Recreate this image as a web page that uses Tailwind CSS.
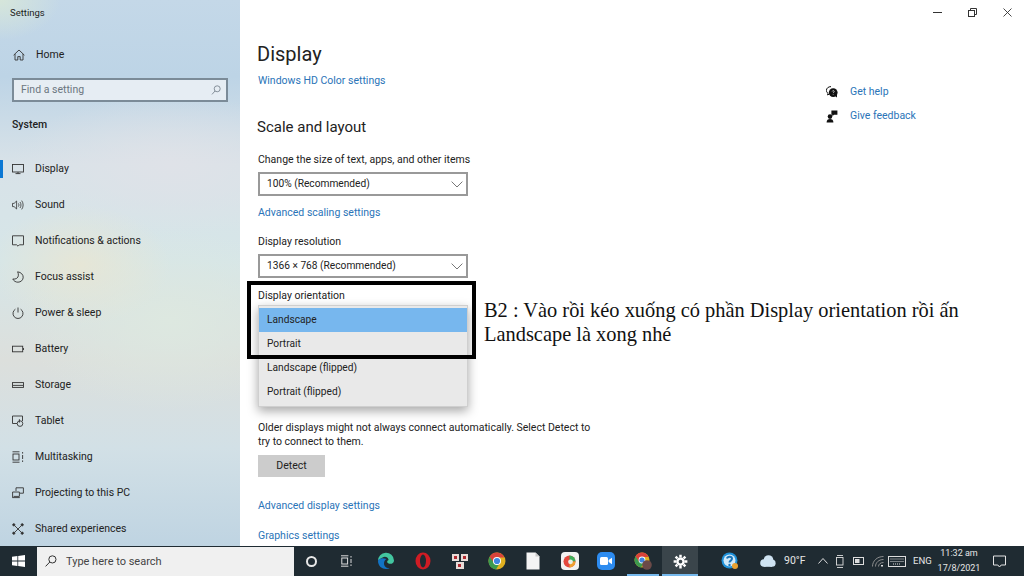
<!DOCTYPE html>
<html lang="en">
<head>
<meta charset="utf-8">
<script src="https://cdn.jsdelivr.net/npm/@tailwindcss/browser@4"></script>
</head>
<body class="m-0 bg-white overflow-hidden">
<div class="relative w-[1024px] h-[576px] overflow-hidden flex flex-col font-['Roboto','Noto_Sans',sans-serif] text-[10.5px] text-[#222]">
  <div class="flex h-[546px] overflow-hidden">
    <!-- Sidebar -->
    <aside class="w-[240px] h-[546px] shrink-0 overflow-hidden flex flex-col [&>*]:shrink-0 bg-[radial-gradient(ellipse_90px_60px_at_80px_265px,#e6e6d6,transparent),radial-gradient(ellipse_160px_70px_at_170px_165px,#dfe2e8,transparent),radial-gradient(ellipse_150px_90px_at_170px_320px,#dde8e0,transparent),radial-gradient(ellipse_60px_40px_at_0px_0px,#d6e6da,transparent),linear-gradient(180deg,#c4d8e8_0%,#bdd4e6_14%,#d8e2e8_30%,#d6e6e8_48%,#dcdfdc_66%,#d2e0e6_82%,#bfd4e2_100%)]">
      <div class="h-[26px] pl-[10px] flex items-center text-[9.5px]">Settings</div>
      <div class="h-[36px] mt-[11px] pl-[13px] flex items-center gap-[11px] text-[#222]">
        <svg class="w-[12px] h-[12px]" viewBox="0 0 12 12" fill="none" stroke="#333" stroke-width="0.9"><path d="M0.6 6.2 6 1l5.400 5.200M2 5v6h2.800V7.600h2.400V11H10V5"/></svg>
        <span>Home</span>
      </div>
      <div class="mx-[12px] mt-[5px] h-[24px] border-2 border-[#7b8b98] bg-[#e6edf3] flex items-center justify-between pl-[7px] pr-[5px] text-[#6b7680]">
        <span>Find a setting</span>
        <svg class="w-[10px] h-[10px]" viewBox="0 0 10 10" fill="none" stroke="#7b8690" stroke-width="0.9"><circle cx="6.200" cy="3.800" r="3"/><path d="M4 6 1 9.400"/></svg>
      </div>
      <div class="mt-[15px] h-[16px] pl-[12px] flex items-center font-medium text-[#222]">System</div>
      <nav class="mt-[18px] flex flex-col [&>*]:shrink-0">
        <div class="relative h-[36px] pl-[12px] flex items-center gap-[11px]">
          <span class="absolute left-0 top-[9px] w-[3px] h-[18px] bg-[#0b78d4]"></span>
          <svg class="w-[12px] h-[12px]" viewBox="0 0 12 12" fill="none" stroke="#333" stroke-width="0.9"><rect x="0.5" y="1.500" width="11" height="7.500"/><path d="M3.500 10.600h5M6 9v1.600"/></svg><span>Display</span>
        </div>
        <div class="h-[36px] pl-[12px] flex items-center gap-[11px]">
          <svg class="w-[12px] h-[12px]" viewBox="0 0 12 12" fill="none" stroke="#333" stroke-width="0.8"><path d="M0.5 4.400h1.600L4.600 2v8L2.100 7.600H0.500zM6.400 4.400c.7 1 .7 2.200 0 3.200M8 3c1.300 1.800 1.300 4.200 0 6M9.700 1.600c1.900 2.700 1.900 6.100 0 8.800"/></svg><span>Sound</span>
        </div>
        <div class="h-[36px] pl-[12px] flex items-center gap-[11px]">
          <svg class="w-[12px] h-[12px]" viewBox="0 0 12 12" fill="none" stroke="#333" stroke-width="0.9"><path d="M0.5 0.800h11v9H7.400L6 11.200 4.600 9.800H0.500z"/></svg><span>Notifications &amp; actions</span>
        </div>
        <div class="h-[36px] pl-[12px] flex items-center gap-[11px]">
          <svg class="w-[12px] h-[12px]" viewBox="0 0 12 12" fill="none" stroke="#333" stroke-width="0.9"><path d="M5.600 0.800c3.600.4 5.600 3 5.600 5.400 0 2.900-2.400 5-5.200 5C3.600 11.200 1.800 10 .8 8c3 .6 5.600-1.100 5.600-3.800 0-1.400-.3-2.400-.8-3.400z"/></svg><span>Focus assist</span>
        </div>
        <div class="h-[36px] pl-[12px] flex items-center gap-[11px]">
          <svg class="w-[12px] h-[12px]" viewBox="0 0 12 12" fill="none" stroke="#333" stroke-width="0.9"><path d="M3.400 2.200a5 5 0 1 0 5.200 0M6 .5v5"/></svg><span>Power &amp; sleep</span>
        </div>
        <div class="h-[36px] pl-[12px] flex items-center gap-[11px]">
          <svg class="w-[12px] h-[12px]" viewBox="0 0 12 12" fill="none" stroke="#333" stroke-width="0.9"><rect x="0.5" y="3.200" width="10.200" height="5.600"/><path d="M11.500 5v2"/></svg><span>Battery</span>
        </div>
        <div class="h-[36px] pl-[12px] flex items-center gap-[11px]">
          <svg class="w-[12px] h-[12px]" viewBox="0 0 12 12" fill="none" stroke="#333" stroke-width="0.9"><rect x="0.5" y="3.600" width="11" height="4.800"/><path d="M1 6.400h10"/></svg><span>Storage</span>
        </div>
        <div class="h-[36px] pl-[12px] flex items-center gap-[11px]">
          <svg class="w-[12px] h-[12px]" viewBox="0 0 12 12" fill="none" stroke="#333" stroke-width="0.9"><path d="M5 8.500H0.500V1h10v5"/><circle cx="8" cy="8.600" r="2.800"/><path d="M7.400 4.200v3.400"/></svg><span>Tablet</span>
        </div>
        <div class="h-[36px] pl-[12px] flex items-center gap-[11px]">
          <svg class="w-[12px] h-[12px]" viewBox="0 0 12 12" fill="none" stroke="#333" stroke-width="0.9"><path d="M.5 .8h7M.5 11.200h7"/><rect x="1" y="3" width="6" height="6"/><path d="M10.600 1v1.600M10.600 4v4M10.600 9.400v1.600"/></svg><span>Multitasking</span>
        </div>
        <div class="h-[36px] pl-[12px] flex items-center gap-[11px]">
          <svg class="w-[12px] h-[12px]" viewBox="0 0 12 12" fill="none" stroke="#333" stroke-width="0.9"><path d="M4 4V.8h7.400v5.400H8M.6 10.600V5h6.800v4.400H1.600M.4 10.600h7.400"/></svg><span>Projecting to this PC</span>
        </div>
        <div class="h-[36px] pl-[12px] flex items-center gap-[11px]">
          <svg class="w-[12px] h-[12px]" viewBox="0 0 12 12" fill="#333" stroke="#333" stroke-width="0.9"><circle cx="1.800" cy="1.800" r="1.100"/><circle cx="10.200" cy="1.800" r="1.100"/><circle cx="1.800" cy="10.200" r="1.100"/><circle cx="10.200" cy="10.200" r="1.100"/><path d="m2.500 2.500 7 7M9.500 2.500l-7 7" fill="none"/></svg><span>Shared experiences</span>
        </div>
      </nav>
    </aside>

    <!-- Main -->
    <main class="flex-1 flex flex-col bg-white">
      <div class="h-[24px] flex justify-end items-center shrink-0">
        <div class="w-[35px] flex justify-center"><span class="block w-[9px] h-px bg-[#333]"></span></div>
        <div class="w-[35px] flex justify-center">
          <svg class="w-[9px] h-[9px]" viewBox="0 0 9 9" fill="none" stroke="#333" stroke-width="1"><rect x=".5" y="2.500" width="6" height="6"/><path d="M2.500 2.500v-2h6v6h-2"/></svg>
        </div>
        <div class="w-[34px] flex justify-center">
          <svg class="w-[9px] h-[9px]" viewBox="0 0 9 9" fill="none" stroke="#333" stroke-width=".9"><path d="m.5.5 8 8M8.500.5l-8 8"/></svg>
        </div>
      </div>
      <div class="flex flex-1">
        <div class="w-[586px] pl-[17px] flex flex-col">
          <h1 class="mt-[16px] h-[28px] leading-[28px] text-[20px] font-normal text-[#222]">Display</h1>
          <a class="mt-[5px] ml-px h-[16px] leading-[16px] text-[#2a74b8]">Windows HD Color settings</a>
          <h2 class="mt-[27px] h-[22px] leading-[22px] text-[15px] font-normal text-[#222]">Scale and layout</h2>
          <div class="mt-[14px] ml-px h-[16px] leading-[16px]">Change the size of text, apps, and other items</div>
          <div class="mt-[4px] ml-px w-[210px] h-[24px] border-2 border-[#999] flex items-center justify-between pl-[7px] pr-[3px]">
            <span class="text-[10.2px]">100% (Recommended)</span>
            <svg class="w-[12px] h-[7px]" viewBox="0 0 12 7" fill="none" stroke="#777"><path d="m.6.6 5.400 5.400L11.400.6"/></svg>
          </div>
          <a class="mt-[9px] ml-px h-[16px] leading-[16px] text-[#2a74b8]">Advanced scaling settings</a>
          <div class="mt-[13px] ml-px h-[16px] leading-[16px]">Display resolution</div>
          <div class="mt-[4px] ml-px w-[210px] h-[24px] border-2 border-[#999] flex items-center justify-between pl-[7px] pr-[3px]">
            <span class="text-[10.2px]">1366 × 768 (Recommended)</span>
            <svg class="w-[12px] h-[7px]" viewBox="0 0 12 7" fill="none" stroke="#777"><path d="m.6.6 5.400 5.400L11.400.6"/></svg>
          </div>
          <div class="mt-[10px] ml-px h-[16px] leading-[16px]">Display orientation</div>
          <div class="mt-[117px] ml-px w-[340px] leading-[14px]">Older displays might not always connect automatically. Select Detect to try to connect to them.</div>
          <div class="mt-[6px] ml-px w-[67px] h-[22px] bg-[#cccccc] flex items-center justify-center">Detect</div>
          <a class="mt-[21px] ml-px h-[16px] leading-[16px] text-[#2a74b8]">Advanced display settings</a>
          <a class="mt-[14px] ml-px h-[16px] leading-[16px] text-[#2a74b8]">Graphics settings</a>
        </div>
        <div class="flex flex-col pt-[56px]">
          <div class="h-[24px] flex items-center gap-[12px]">
            <svg class="w-[12px] h-[12px]" viewBox="0 0 12 12"><path d="M5 .6C2.400.6.4 2.200.4 4.400c0 1.200.6 2.200 1.600 2.900L1.600 9l2.100-1.200" fill="none" stroke="#111"/><circle cx="7.200" cy="6.600" r="4.400" fill="#111"/><path d="m9 10 2 1.600V8" fill="#111"/><path d="M6.200 5.400c.3-1 2-1 2 .1 0 .8-1 .8-1 1.600M7.200 8.400v.6" fill="none" stroke="#fff" stroke-width=".7"/></svg>
            <a class="text-[#2a74b8]">Get help</a>
          </div>
          <div class="h-[24px] flex items-center gap-[12px]">
            <svg class="w-[12px] h-[13px]" viewBox="0 0 12 13" fill="#111"><circle cx="4" cy="6.600" r="2.300"/><path d="M.6 12.600c0-2.600 1.300-3.600 3.400-3.600s3.400 1 3.400 3.600z"/><path d="M5.400.6h6v4.200H8L6.400 6.200V4.800h-1z"/></svg>
            <a class="text-[#2a74b8]">Give feedback</a>
          </div>
        </div>
      </div>
    </main>
  </div>

  <!-- Taskbar -->
  <footer class="h-[30px] shrink-0 bg-[#1f2b32] flex items-center text-[#e6e6e6] [&>*]:shrink-0">
    <div class="w-[37px] h-full flex items-center justify-center">
      <svg class="w-[13px] h-[12px]" viewBox="0 0 13 12" fill="#fff"><path d="M0 1.800 5.400 1v4.600H0zM6.200.9 13 0v5.600H6.200zM0 6.400h5.400V11L0 10.200zM6.200 6.400H13V12l-6.800-.9z"/></svg>
    </div>
    <div class="w-[257px] h-[29px] bg-[#f0f0f0] flex items-center gap-[9px] pl-[8px] text-[#444] text-[11px]">
      <svg class="w-[12px] h-[12px]" viewBox="0 0 12 12" fill="none" stroke="#333" stroke-width="1"><circle cx="7.400" cy="4.400" r="3.600"/><path d="M4.800 7 .6 11.400"/></svg>
      <span class="pt-[2px]">Type here to search</span>
    </div>
    <div class="w-[34px] flex justify-center"><span class="block w-[11px] h-[11px] rounded-full border-2 border-[#e8e8e8]"></span></div>
    <div class="w-[24px] ml-[7px] flex justify-center">
      <svg class="w-[12px] h-[12px]" viewBox="0 0 12 12" fill="none" stroke="#ddd"><path d="M0 .8h7.400M0 11.200h7.400"/><rect x=".8" y="3" width="5.800" height="6"/><path d="M10 1v1.600M10 4v4M10 9.400V11"/></svg>
    </div>
    <div class="flex items-center ml-[9px] [&>*]:shrink-0">
      <div class="w-[36px] flex justify-center">
        <svg class="w-[18px] h-[18px]" viewBox="0 0 18 18"><path d="M1 9a8 8 0 0 1 16-.6c0 3-3 4-5.400 3.200-2-.7-2-3 0-3.600C11 5 8 4 5.600 5.400 3.500 6.500 2 7.500 1 9z" fill="#43c6a0"/><path d="M1 9c0 5 4 8 8 8 1.500 0 2.800-.4 3.800-1-3 .6-5.800-1.600-5.800-4.600 0-2 1-3.600 2.500-4.400C5 5.500 1.600 6.400 1 9z" fill="#1273c4"/></svg>
      </div>
      <div class="w-[37px] flex justify-center">
        <svg class="w-[16px] h-[18px]" viewBox="0 0 16 18"><ellipse cx="8" cy="9" rx="7.500" ry="8.500" fill="#d01c24"/><ellipse cx="8" cy="9" rx="3" ry="6.400" fill="#1f2b32"/></svg>
      </div>
      <div class="w-[37px] flex justify-center">
        <svg class="w-[18px] h-[18px]" viewBox="0 0 18 18"><rect x="1" y="2" width="7" height="7" fill="#e8dcd8"/><rect x="10" y="2" width="7" height="7" fill="#e8dcd8"/><rect x="5" y="10" width="8" height="7" fill="#e8dcd8"/><rect x="3" y="4" width="3" height="3" fill="#b02a30"/><rect x="12" y="4" width="3" height="3" fill="#b02a30"/><rect x="7" y="12" width="3" height="3" fill="#b02a30"/></svg>
      </div>
      <div class="w-[37px] flex justify-center">
        <svg class="w-[18px] h-[18px]" viewBox="0 0 18 18"><circle cx="9" cy="9" r="8.500" fill="#e0b020"/><path d="M9 .5a8.500 8.500 0 0 0-7.400 4.300L5.500 12 9 5.500h7.400A8.500 8.500 0 0 0 9 .5z" fill="#d9423a"/><path d="M1.600 4.800A8.500 8.500 0 0 0 8 17.500L11.800 11H6z" fill="#3c9a4f"/><circle cx="9" cy="9" r="4" fill="#fff"/><circle cx="9" cy="9" r="3.100" fill="#3f86e0"/></svg>
      </div>
      <div class="w-[36px] flex justify-center">
        <svg class="w-[14px] h-[18px]" viewBox="0 0 14 18"><path d="M.5 .5h9l4 4v13H.5z" fill="#f4f4f4"/><path d="M9.500 .5v4h4z" fill="#c8c8c8"/></svg>
      </div>
      <div class="w-[37px] flex justify-center">
        <div class="w-[18px] h-[18px] rounded-[4px] bg-[#f2f2f2] flex items-center justify-center">
          <svg class="w-[13px] h-[13px]" viewBox="0 0 13 13"><circle cx="6.500" cy="6.500" r="6" fill="#e3483e"/><path d="M6.500 .5a6 6 0 0 1 6 6h-6z" fill="#3fae5a"/><path d="M12.500 6.500a6 6 0 0 1-6 6v-6z" fill="#f0a030"/><circle cx="7.500" cy="6.800" r="2.400" fill="#e8f0e8"/></svg>
        </div>
      </div>
      <div class="w-[36px] flex justify-center">
        <div class="w-[18px] h-[18px] rounded-[5px] bg-[#2d8cf0] flex items-center justify-center">
          <svg class="w-[12px] h-[8px]" viewBox="0 0 12 8" fill="#fff"><rect width="8" height="8" rx="1.500"/><path d="M8.600 3 12 .8v6.400L8.600 5z"/></svg>
        </div>
      </div>
      <div class="relative w-[38px] h-[30px] flex justify-center items-center">
        <svg class="w-[18px] h-[18px]" viewBox="0 0 18 18"><circle cx="8" cy="8" r="7.500" fill="#e0b020"/><path d="M8 .5A7.500 7.500 0 0 0 1.500 4.300L5 10.500 8 5h6.500A7.500 7.500 0 0 0 8 .5z" fill="#d9423a"/><path d="M1.500 4.300A7.500 7.500 0 0 0 7 15.400L10.400 9.600H5z" fill="#3c9a4f"/><circle cx="8" cy="8" r="3.400" fill="#fff"/><circle cx="8" cy="8" r="2.600" fill="#3f86e0"/><circle cx="13" cy="13" r="4.800" fill="#6b4a48"/></svg>
        <span class="absolute bottom-0 left-[3px] right-[3px] h-[2px] bg-[#76b9ed]"></span>
      </div>
      <div class="relative w-[36px] h-[30px] bg-[#3a454b] flex justify-center items-center">
        <svg class="w-[15px] h-[15px]" viewBox="0 0 24 24" fill="none" stroke="#fff" stroke-width="4"><circle cx="12" cy="12" r="5"/><path d="M12 1v4M12 19v4M1 12h4M19 12h4M4.200 4.200 7 7M17 17l2.800 2.800M4.200 19.800 7 17M17 7l2.800-2.800"/></svg>
        <span class="absolute bottom-0 left-0 right-0 h-[2px] bg-[#76b9ed]"></span>
      </div>
    </div>
    <div class="w-[28px] ml-[18px] flex justify-center">
      <svg class="w-[18px] h-[18px]" viewBox="0 0 18 18"><circle cx="8.500" cy="8.500" r="8" fill="#1e90d8"/><circle cx="8.500" cy="8.500" r="6" fill="#cfe8f8"/><path d="M6 6.500c.5-2.400 5-2.400 5 .3 0 1.800-2.500 1.800-2.500 3.700" fill="none" stroke="#1873b8" stroke-width="2"/><circle cx="8.500" cy="13" r="1.200" fill="#1873b8"/><circle cx="14" cy="14" r="3" fill="#e8a030"/></svg>
    </div>
    <svg class="w-[17px] h-[12px] ml-[15px]" viewBox="0 0 17 12" fill="#cfe3f2"><circle cx="5" cy="8" r="3.800"/><circle cx="9.500" cy="5" r="4.800"/><circle cx="13" cy="8.200" r="3.600"/><rect x="5" y="8" width="8" height="3.800"/></svg>
    <span class="ml-[8px] w-[24px] text-[10.5px]">90°F</span>
    <svg class="w-[10px] h-[6px] ml-[10px]" viewBox="0 0 10 6" fill="none" stroke="#ddd"><path d="m.5 5.500 4.500-5 4.500 5"/></svg>
    <svg class="w-[9px] h-[13px] ml-[8px]" viewBox="0 0 9 13" fill="none" stroke="#ddd" stroke-width=".9"><rect x=".5" y="2.500" width="6.500" height="7.500"/><path d="M1 .5h6M1 12.500h6"/></svg>
    <svg class="w-[12px] h-[8px] ml-[8px]" viewBox="0 0 12 8"><rect x=".5" y=".5" width="10" height="7" fill="none" stroke="#ddd"/><rect x="2" y="2" width="4.500" height="4" fill="#ddd"/></svg>
    <svg class="w-[12px] h-[11px] ml-[7px]" viewBox="0 0 12 11" fill="none" stroke="#999" stroke-width=".9"><path d="M.5 10.500C.5 5 5 .5 11.500 .5M3.500 10.500c0-3.800 3.200-7 8-7M6.500 10.500c0-2.300 2-4 5-4"/><path d="M10 10.500V9" stroke="#ddd" stroke-width="2"/></svg>
    <svg class="w-[18px] h-[11px] ml-[4px]" viewBox="0 0 18 11" fill="none" stroke="#ddd"><rect x=".5" y=".5" width="17" height="10"/><path d="M2.500 3h13M2.500 5.500h13M5 8h8" stroke-dasharray="1 1"/></svg>
    <span class="ml-[7px] w-[18px] text-[9.500px]">ENG</span>
    <div class="ml-[6px] w-[44px] flex flex-col items-center text-[9px] leading-[15px]">
      <span>11:32 am</span><span>17/8/2021</span>
    </div>
    <svg class="w-[13px] h-[13px] ml-[12px]" viewBox="0 0 13 13" fill="none" stroke="#e4e4e4"><path d="M.5 1h12v9H8.200L6.500 12 4.800 10H.5z"/></svg>
  </footer>

  <!-- Open orientation dropdown -->
  <div class="absolute left-[258px] top-[305px] w-[210px] h-[102px] bg-[#e9e9e9] border border-[#cfcfcf] shadow-[0_4px_10px_rgba(0,0,0,0.35)] py-[2px] text-[#222] text-[10.2px]">
    <div class="h-[24px] bg-[#77b7ee] pl-[8px] flex items-center">Landscape</div>
    <div class="h-[24px] pl-[8px] flex items-center">Portrait</div>
    <div class="h-[24px] pl-[8px] flex items-center">Landscape (flipped)</div>
    <div class="h-[24px] pl-[8px] flex items-center">Portrait (flipped)</div>
  </div>
  <!-- Annotation -->
  <div class="absolute left-[247px] top-[281px] w-[229px] h-[78px] border-[4px] border-black"></div>
  <p class="absolute left-[484px] top-[298px] w-[520px] font-['Liberation_Serif',serif] text-[20.4px] leading-[24px] text-[#111]">B2 : Vào rồi kéo xuống có phần Display orientation rồi ấn Landscape là xong nhé</p>
</div>
</body>
</html>
